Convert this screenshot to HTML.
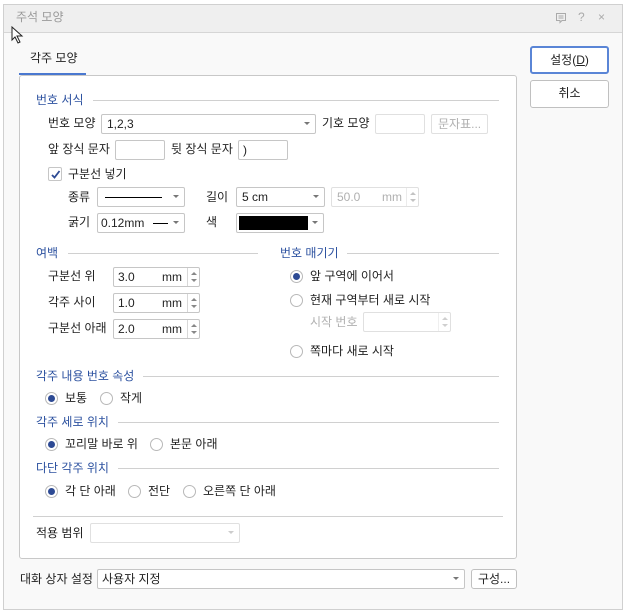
<!DOCTYPE html>
<html><head><meta charset="utf-8"><style>
*{box-sizing:border-box;margin:0;padding:0}
body{width:625px;height:611px;background:#fff;font-family:"Liberation Sans","Noto Sans CJK KR",sans-serif;font-size:12px;color:#222;position:relative;overflow:hidden}
.a{position:absolute;white-space:nowrap;line-height:14px}
.dlg{position:absolute;left:3px;top:4px;width:620px;height:606px;border:1px solid #d0d0d0;background:#f9f9f9}
.tb{position:absolute;left:4px;top:5px;width:618px;height:28px;background:#efefef;border-bottom:1px solid #d6d6d6}
.panel{position:absolute;left:19px;top:75px;width:498px;height:484px;background:#fff;border:1px solid #c8c8c8;border-radius:3px}
.h{color:#2d52a0}
.ln{position:absolute;height:1px;background:#d0d0d0}
.box{position:absolute;background:#fff;border:1px solid #c6c6c6;border-radius:2px}
.dis{border-color:#e0e0e0}
.arr{position:absolute;right:5px;top:7px;width:0;height:0;border-left:3px solid transparent;border-right:3px solid transparent;border-top:3px solid #777}
.btn{position:absolute;background:#fff;border:1px solid #c0c0c0;border-radius:3px;text-align:center;line-height:25px}
.rad{position:absolute;width:13px;height:13px;border:1px solid #b8b8b8;border-radius:50%;background:#fff}
.rad.on::after{content:"";position:absolute;left:2px;top:2px;width:7px;height:7px;border-radius:50%;background:#2d4a94}
.spin{position:absolute;right:0;top:0;width:12px;height:100%;border-left:1px solid #d8d8d8}
.spin::before{content:"";position:absolute;left:3px;top:4px;border-left:3px solid transparent;border-right:3px solid transparent;border-bottom:3px solid #888}
.spin::after{content:"";position:absolute;left:3px;bottom:4px;border-left:3px solid transparent;border-right:3px solid transparent;border-top:3px solid #888}
.gray{color:#b0b0b0}
</style></head><body>
<div class="dlg"></div>
<div class="tb"></div>
<div class="a" style="left:16px;top:10px;color:#999">주석 모양</div>
<svg class="a" style="left:555px;top:12px" width="12" height="12"><path d="M1.5 1.5 H10.5 V8.5 H7 L5 10.5 V8.5 H1.5 Z M3.5 4 H8.5 M3.5 6 H8.5" fill="none" stroke="#aaa" stroke-width="1"/></svg>
<div class="a" style="left:578px;top:10px;color:#aaa">?</div>
<div class="a" style="left:598px;top:10px;color:#aaa">×</div>
<svg class="a" style="left:11px;top:26px" width="14" height="18"><path d="M1 1 L1 14 L4 11 L7 17 L9 16 L6 10 L11 10 Z" fill="#fff" stroke="#222" stroke-width="1"/></svg>

<div class="a" style="left:30px;top:51px">각주 모양</div>
<div style="position:absolute;left:19px;top:73px;width:67px;height:2px;background:#4a78d0"></div>
<div class="panel"></div>
<div class="btn" style="left:530px;top:46px;width:79px;height:28px;border:2px solid #5a85d6;line-height:24px">설정(<u>D</u>)</div>
<div class="btn" style="left:530px;top:80px;width:79px;height:28px">취소</div>

<div class="a h" style="left:36px;top:93px">번호 서식</div><div class="ln" style="left:93px;top:100px;width:406px"></div>
<div class="a" style="left:48px;top:116px">번호 모양</div>
<div class="box" style="left:101px;top:114px;width:215px;height:20px"><span class="a" style="left:5px;top:2px">1,2,3</span><i class="arr"></i></div>
<div class="a" style="left:322px;top:116px">기호 모양</div>
<div class="box dis" style="left:375px;top:114px;width:50px;height:20px"></div>
<div class="box dis" style="left:431px;top:114px;width:57px;height:20px"><span class="a gray" style="left:6px;top:2px">문자표...</span></div>
<div class="a" style="left:48px;top:142px">앞 장식 문자</div>
<div class="box" style="left:115px;top:140px;width:50px;height:20px"></div>
<div class="a" style="left:171px;top:142px">뒷 장식 문자</div>
<div class="box" style="left:238px;top:140px;width:50px;height:20px"><span class="a" style="left:4px;top:2px">)</span></div>
<div class="box" style="left:48px;top:167px;width:14px;height:14px"><svg style="position:absolute;left:1px;top:1px" width="11" height="11"><path d="M2 6 L4.5 8.5 L9.5 2" fill="none" stroke="#2d4a94" stroke-width="1.8"/></svg></div>
<div class="a" style="left:68px;top:167px">구분선 넣기</div>
<div class="a" style="left:68px;top:190px">종류</div>
<div class="box" style="left:97px;top:187px;width:88px;height:20px"><div style="position:absolute;left:7px;top:9px;width:57px;height:1px;background:#000"></div><i class="arr"></i></div>
<div class="a" style="left:206px;top:190px">길이</div>
<div class="box" style="left:236px;top:187px;width:89px;height:20px"><span class="a" style="left:5px;top:2px">5 cm</span><i class="arr"></i></div>
<div class="box dis" style="left:331px;top:187px;width:88px;height:20px"><span class="a gray" style="left:5px;top:2px">50.0</span><span class="a gray" style="left:50px;top:2px">mm</span><i class="spin" style="opacity:.5"></i></div>
<div class="a" style="left:68px;top:215px">굵기</div>
<div class="box" style="left:97px;top:213px;width:88px;height:20px"><span class="a" style="left:3px;top:2px">0.12mm</span><div style="position:absolute;left:55px;top:9px;width:15px;height:1px;background:#000"></div><i class="arr"></i></div>
<div class="a" style="left:206px;top:215px">색</div>
<div class="box" style="left:236px;top:213px;width:88px;height:20px"><div style="position:absolute;left:2px;top:2px;width:69px;height:14px;background:#000"></div><i class="arr"></i></div>

<div class="a h" style="left:36px;top:246px">여백</div><div class="ln" style="left:68px;top:253px;width:190px"></div>
<div class="a h" style="left:280px;top:246px">번호 매기기</div><div class="ln" style="left:347px;top:253px;width:152px"></div>
<div class="a" style="left:48px;top:269px">구분선 위</div>
<div class="box" style="left:113px;top:267px;width:87px;height:20px"><span class="a" style="left:4px;top:2px">3.0</span><span class="a" style="left:48px;top:2px">mm</span><i class="spin"></i></div>
<div class="a" style="left:48px;top:295px">각주 사이</div>
<div class="box" style="left:113px;top:293px;width:87px;height:20px"><span class="a" style="left:4px;top:2px">1.0</span><span class="a" style="left:48px;top:2px">mm</span><i class="spin"></i></div>
<div class="a" style="left:48px;top:321px">구분선 아래</div>
<div class="box" style="left:113px;top:319px;width:87px;height:20px"><span class="a" style="left:4px;top:2px">2.0</span><span class="a" style="left:48px;top:2px">mm</span><i class="spin"></i></div>
<div class="rad on" style="left:290px;top:270px"></div><div class="a" style="left:310px;top:269px">앞 구역에 이어서</div>
<div class="rad" style="left:290px;top:294px"></div><div class="a" style="left:310px;top:293px">현재 구역부터 새로 시작</div>
<div class="a gray" style="left:310px;top:315px">시작 번호</div>
<div class="box dis" style="left:363px;top:312px;width:88px;height:20px"><i class="spin" style="opacity:.4"></i></div>
<div class="rad" style="left:290px;top:345px"></div><div class="a" style="left:310px;top:344px">쪽마다 새로 시작</div>

<div class="a h" style="left:36px;top:369px">각주 내용 번호 속성</div><div class="ln" style="left:143px;top:376px;width:356px"></div>
<div class="rad on" style="left:45px;top:392px"></div><div class="a" style="left:65px;top:391px">보통</div>
<div class="rad" style="left:100px;top:392px"></div><div class="a" style="left:120px;top:391px">작게</div>
<div class="a h" style="left:36px;top:415px">각주 세로 위치</div><div class="ln" style="left:118px;top:422px;width:381px"></div>
<div class="rad on" style="left:45px;top:438px"></div><div class="a" style="left:65px;top:437px">꼬리말 바로 위</div>
<div class="rad" style="left:150px;top:438px"></div><div class="a" style="left:170px;top:437px">본문 아래</div>
<div class="a h" style="left:36px;top:461px">다단 각주 위치</div><div class="ln" style="left:118px;top:468px;width:381px"></div>
<div class="rad on" style="left:45px;top:485px"></div><div class="a" style="left:65px;top:484px">각 단 아래</div>
<div class="rad" style="left:128px;top:485px"></div><div class="a" style="left:148px;top:484px">전단</div>
<div class="rad" style="left:183px;top:485px"></div><div class="a" style="left:203px;top:484px">오른쪽 단 아래</div>
<div class="ln" style="left:33px;top:516px;width:470px"></div>
<div class="a" style="left:36px;top:526px">적용 범위</div>
<div class="box dis" style="left:90px;top:523px;width:150px;height:20px"><i class="arr" style="border-top-color:#ccc"></i></div>

<div class="a" style="left:20px;top:572px">대화 상자 설정</div>
<div class="box" style="left:97px;top:569px;width:368px;height:20px"><span class="a" style="left:4px;top:2px">사용자 지정</span><i class="arr"></i></div>
<div class="btn" style="left:471px;top:569px;width:46px;height:20px;line-height:18px">구성...</div>
</body></html>
